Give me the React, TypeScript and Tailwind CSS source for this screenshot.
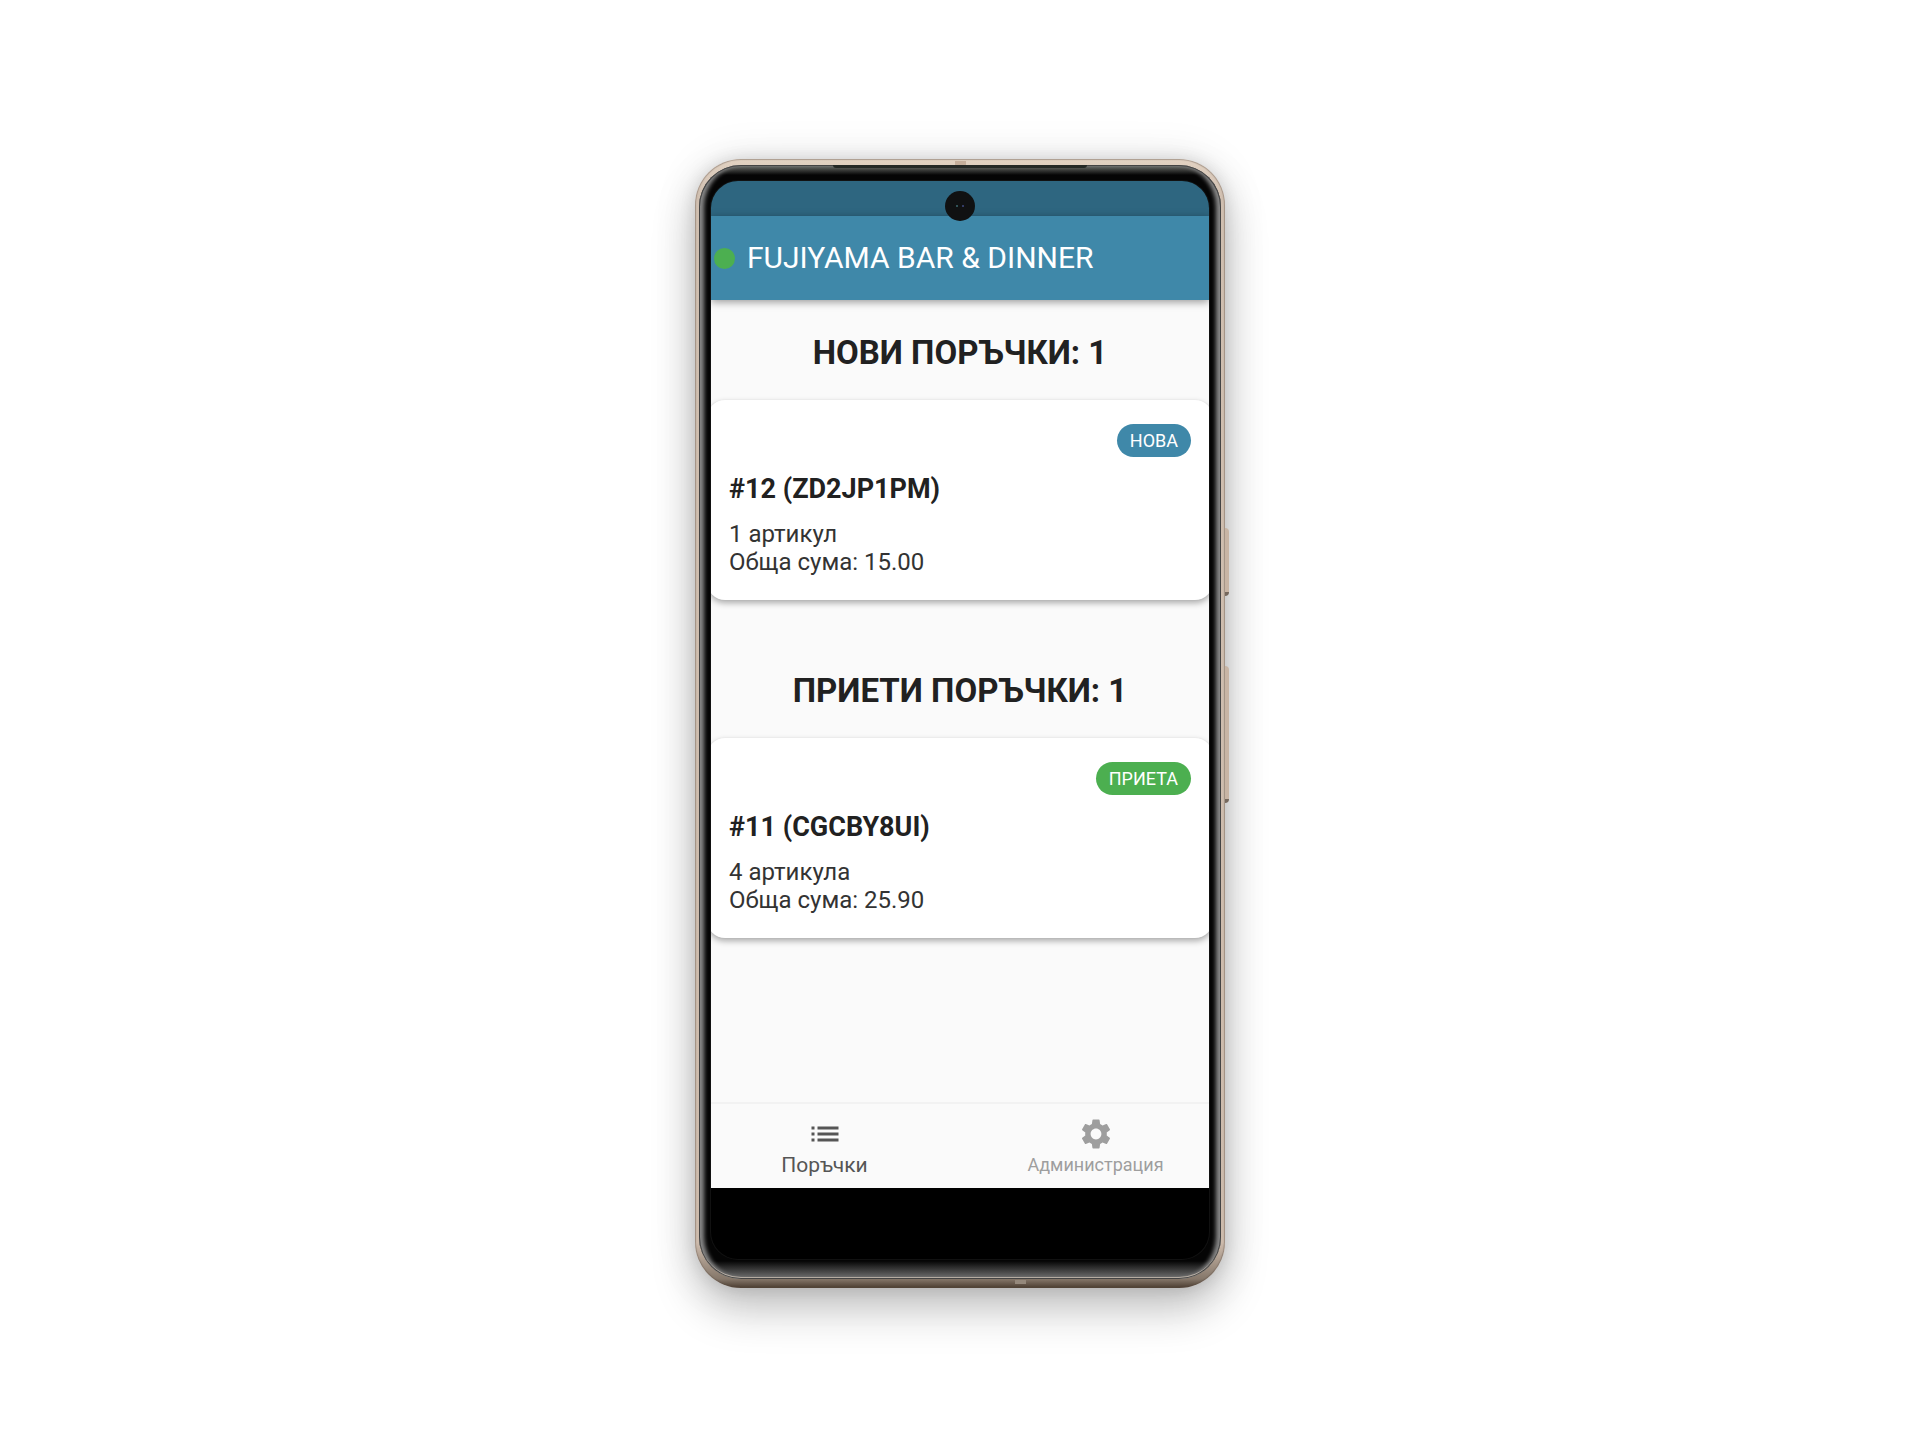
import React from 'react';
import { MdList, MdSettings } from 'react-icons/md';

interface Order {
  id: number;
  code: string;
  items: string;
  total: string;
}

interface OrderSectionProps {
  title: string;
  status: string;
  badgeClass: string;
  orders: Order[];
}

const newOrders: Order[] = [{ id: 12, code: 'ZD2JP1PM', items: '1 артикул', total: '15.00' }];
const acceptedOrders: Order[] = [{ id: 11, code: 'CGCBY8UI', items: '4 артикула', total: '25.90' }];

const OrderSection: React.FC<OrderSectionProps> = ({ title, status, badgeClass, orders }) => (
  <section className="mb-[38px]">
    <h2 className="pt-[33px] pb-[27px] text-center text-[33px] leading-10 font-bold">
      {title}: {orders.length}
    </h2>
    {orders.map((order) => (
      <article
        key={order.id}
        className="-mx-1 flex flex-col rounded-[18px] bg-white px-[22px] pt-6 pb-6 shadow-[0_3px_6px_rgba(0,0,0,0.32),0_0_2px_rgba(0,0,0,0.06)]"
      >
        <span className={`self-end rounded-full px-[13px] text-lg leading-[33px] text-white ${badgeClass}`}>{status}</span>
        <h3 className="mt-4 text-[27px] leading-8 font-bold">
          #{order.id} ({order.code})
        </h3>
        <p className="mt-[15px] text-2xl leading-7 text-[#333333]">{order.items}</p>
        <p className="text-2xl leading-7 text-[#333333]">Обща сума: {order.total}</p>
      </article>
    ))}
  </section>
);

// Metal body, side keys, antenna lines and glass bezel around the screen
const Phone: React.FC<{ children: React.ReactNode }> = ({ children }) => (
  <div className="relative h-[1129px] w-[530px] shrink-0 rounded-[46px] bg-[linear-gradient(to_bottom,#e2d2c2,#d0bfb0_40px,#cdbbac_calc(100%-45px),#85776a_calc(100%-9px),#4a3c30)] px-1 pt-1.5 pb-[9px] shadow-[inset_0_0_1px_1px_rgba(90,75,65,0.4),0_0_44px_rgba(0,0,0,0.1),0_0_16px_rgba(0,0,0,0.1),0_22px_44px_rgba(0,0,0,0.22)]">
    <div className="absolute top-[369px] -right-1 h-[68px] w-1 rounded-r-sm border-b-4 border-[#75685d] bg-[#c8b5a5]" />
    <div className="absolute top-[507px] -right-1 h-[137px] w-1 rounded-r-sm border-b-4 border-[#75685d] bg-[#c8b5a5]" />
    <div className="absolute top-0.5 left-[260px] h-1 w-[11px] bg-[#c5ae9b]" />
    <div className="absolute bottom-1 left-[320px] h-1 w-[11px] bg-[#94887b]" />
    <div className="h-full rounded-[42px] bg-[linear-gradient(to_bottom,#70736f,#050505_10px,#050505_calc(100%-18px),#757575)] px-3 pt-4 pb-5 shadow-[inset_0_0_0_1px_#444444,inset_0_-2px_0_0_#b5aca2,inset_6px_0_4px_-1px_#8a8a8a,inset_-6px_0_4px_-1px_#8a8a8a]">
      <div className="relative flex h-full flex-col overflow-hidden rounded-[27px] bg-black shadow-[0_0_0_1px_#111111]">{children}</div>
    </div>
    <div className="absolute top-1.5 left-[138px] h-[3px] w-[254px] rounded-b-sm bg-[#242825]" />
    <div className="absolute top-8 left-[250px] z-20 flex size-[30px] items-center justify-center gap-1 rounded-full bg-[#101112]">
      <i className="size-0.5 rounded-full bg-[#3d6a70]" />
      <i className="size-0.5 rounded-full bg-[#3f4a80]" />
    </div>
  </div>
);

const App: React.FC = () => {
  return (
    <div className="flex min-h-screen items-center justify-center bg-white pt-[7px] font-['Roboto',sans-serif] text-[#212121]">
      <Phone>
        <div className="h-[35px] shrink-0 bg-[#2e6680]" />
        <header className="z-10 flex h-[84px] shrink-0 items-center gap-3 bg-[#3f88a9] pl-[3px] shadow-[0_2px_8px_rgba(0,0,0,0.4)]">
          <span className="size-[21px] rounded-full bg-[#4caf50]" />
          <h1 className="text-3xl text-white">FUJIYAMA BAR &amp; DINNER</h1>
        </header>
        <main className="min-h-0 flex-1 overflow-hidden bg-[#fafafa]">
          <OrderSection title="НОВИ ПОРЪЧКИ" status="НОВА" badgeClass="bg-[#3f88a9]" orders={newOrders} />
          <OrderSection title="ПРИЕТИ ПОРЪЧКИ" status="ПРИЕТА" badgeClass="bg-[#4caf50]" orders={acceptedOrders} />
        </main>
        <nav className="mb-[71px] grid shrink-0 grid-cols-2 gap-11 border-t-2 border-[#f2f2f2] bg-[#fafafa]">
          <button className="flex flex-col items-center pt-3 pb-2.5 text-[#555555]">
            <MdList className="size-9" />
            <span className="text-[21px] leading-[26px]">Поръчки</span>
          </button>
          <button className="flex flex-col items-center pt-3 pb-2.5 text-[#9e9e9e]">
            <MdSettings className="size-9" />
            <span className="text-lg leading-[26px]">Администрация</span>
          </button>
        </nav>
      </Phone>
    </div>
  );
};

export default App;
